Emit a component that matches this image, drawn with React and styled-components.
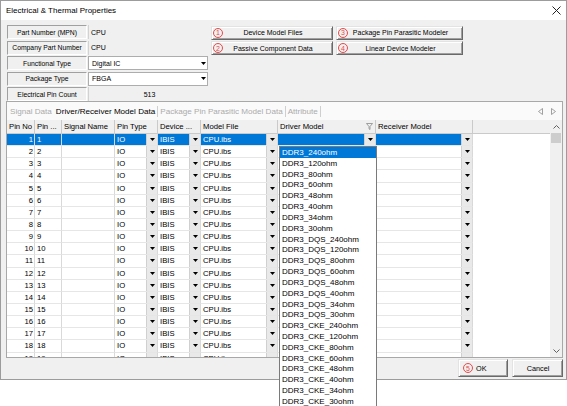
import React from 'react';
import styled, { createGlobalStyle } from 'styled-components';

const GlobalStyle = createGlobalStyle`
  html, body { margin: 0; padding: 0; background: #fff; }
  body { font-family: "Liberation Sans", Arial, sans-serif; color: #000; }
  * { box-sizing: border-box; }
`;

const COLS = '28px 27px 53px 43px 43px 77px 98px 97px 1fr';

const Page = styled.div`
  position: relative;
  width: 567px;
  height: 406px;
  overflow: hidden;
  background: #fff;
`;

const Dialog = styled.div`
  width: 567px;
  height: 380px;
  border: 1px solid #9c9c9c;
  background: #f0f0f0;
  display: flex;
  flex-direction: column;
`;

const TitleBar = styled.div`
  height: 19px;
  background: #fff;
  display: flex;
  align-items: center;
  justify-content: space-between;
  padding: 0 5px 0 5px;
  font-size: 8px;
`;

const Body = styled.div`
  display: flex;
  flex-direction: column;
  padding: 5px 3px 0 6px;
`;

const TopSection = styled.div`
  display: flex;
  gap: 3px;
  height: 76px;
`;

const PropGrid = styled.div`
  display: grid;
  grid-template-columns: 80px 120px;
  grid-auto-rows: 14px;
  row-gap: 1.5px;
  column-gap: 1px;
`;

const PropLabel = styled.div`
  display: flex;
  align-items: center;
  justify-content: center;
  font-size: 6.8px;
  white-space: nowrap;
  border: 1px solid;
  border-color: #a0a0a0 #fff #fff #a0a0a0;
`;

const PropValue = styled.div`
  display: flex;
  align-items: center;
  justify-content: ${p => (p.$center ? 'center' : 'flex-start')};
  padding-left: 2px;
  font-size: 7px;
  border-left: 1px solid #d2d2d2;
`;

const Combo = styled.div`
  display: flex;
  align-items: center;
  justify-content: space-between;
  background: #fff;
  border: 1px solid #adadad;
  padding: 0 1px 0 3px;
  font-size: 7px;
`;

const ActionGrid = styled.div`
  display: grid;
  grid-template-columns: 122px 127px;
  grid-auto-rows: 14px;
  gap: 1.5px 3px;
  padding-top: 0.5px;
`;

const Button = styled.button`
  display: flex;
  align-items: center;
  justify-content: ${p => (p.$left ? 'flex-start' : 'center')};
  gap: 3px;
  margin: 0;
  padding: 0 ${p => (p.$left ? '0' : p.$badge ? '12px' : '0')} 0 ${p => (p.$left ? '4px' : '1px')};
  font-family: inherit;
  font-size: 7px;
  color: #000;
  background: #f0f0f0;
  border: 1px solid;
  border-color: #e3e3e3 #696969 #696969 #e3e3e3;
  box-shadow: inset 1px 1px #fff, inset -1px -1px #a0a0a0;
  white-space: nowrap;
`;

const ButtonText = styled.span`
  flex: ${p => (p.$fill ? 1 : 'none')};
  text-align: center;
`;

const Badge = styled.span`
  flex: none;
  width: 10px;
  height: 10px;
  border: 1px solid #e84a4a;
  border-radius: 50%;
  color: #e84a4a;
  font-size: 7px;
  line-height: 1;
  display: inline-flex;
  align-items: center;
  justify-content: center;
`;

const TabPanel = styled.div`
  margin-left: -1px;
  width: 557px;
  height: 257px;
  border: 1px solid #a8a8a8;
  display: flex;
  flex-direction: column;
  background: #fff;
`;

const TabStrip = styled.div`
  height: 18px;
  display: flex;
  align-items: center;
  padding: 0 4px 0 1px;
  background: #fafafa;
  font-size: 8.1px;
`;

const Tab = styled.div`
  padding: 0 2px;
  height: 11px;
  display: flex;
  align-items: center;
  color: ${p => (p.$active ? '#000' : '#ababab')};
  border-right: ${p => (p.$sep ? '1px solid #cfcfcf' : 'none')};
  white-space: nowrap;
`;

const TabArrows = styled.div`
  margin-left: auto;
  display: flex;
  gap: 8px;
  padding-right: 2px;
`;

const GridArea = styled.div`
  flex: 1;
  display: flex;
  min-height: 0;
`;

const Table = styled.div`
  flex: 1;
  overflow: hidden;
`;

const HeaderRow = styled.div`
  display: grid;
  grid-template-columns: ${COLS};
  height: 14px;
  background: #f0f0f0;
  border-bottom: 1px solid #cacaca;
`;

const HeadCell = styled.div`
  display: flex;
  align-items: center;
  justify-content: space-between;
  padding: 0 2px;
  font-size: 7.7px;
  white-space: nowrap;
  overflow: hidden;
  border-right: ${p => (p.$last ? 'none' : '1px solid #cacaca')};
`;

const Row = styled.div`
  display: grid;
  grid-template-columns: ${COLS};
  height: 12.15px;
`;

const Cell = styled.div`
  display: flex;
  align-items: center;
  justify-content: ${p => (p.$right ? 'flex-end' : 'flex-start')};
  padding: 0 ${p => (p.$right ? '1px' : '0')} 0 ${p => (p.$right ? '0' : '2px')};
  font-size: 7.7px;
  white-space: nowrap;
  overflow: hidden;
  background: ${p => (p.$sel ? '#0078d7' : '#fff')};
  color: ${p => (p.$sel ? '#fff' : '#000')};
  border-right: 1px solid #d9d9d9;
  border-bottom: 1px solid #e6e6e6;
`;

const ComboCell = styled(Cell)`
  padding-right: 0;
`;

const CellText = styled.span`
  flex: 1;
`;

const FillCell = styled.div`
  background: #fff;
`;

const DropBtn = styled.span`
  flex: none;
  width: 11px;
  height: 100%;
  background: #e9e9e9;
  border-left: 1px solid #d0d0d0;
  display: flex;
  align-items: center;
  justify-content: center;
`;

const Scrollbar = styled.div`
  width: 12px;
  display: flex;
  flex-direction: column;
  background: #f0f0f0;
`;

const ScrollBtn = styled.div`
  height: ${p => p.$h}px;
  display: flex;
  align-items: center;
  justify-content: center;
`;

const Thumb = styled.div`
  height: 10px;
  margin: 0 1px;
  background: #cdcdcd;
`;

const Track = styled.div`
  flex: 1;
`;

const Footer = styled.div`
  display: flex;
  justify-content: flex-end;
  gap: 4px;
  margin-top: 1px;
  height: 18px;
`;

const FooterButton = styled(Button)`
  width: ${p => p.$w}px;
  font-size: 7.3px;
`;

const DropList = styled.div`
  position: absolute;
  left: 279px;
  top: 146px;
  width: 98px;
  background: #fff;
  border: 1px solid #7a7a7a;
  z-index: 2;
`;

const ListItem = styled.div`
  height: 10.83px;
  display: flex;
  align-items: center;
  padding-left: 2px;
  font-size: 8px;
  white-space: nowrap;
  background: ${p => (p.$sel ? '#0078d7' : '#fff')};
  color: ${p => (p.$sel ? '#fff' : '#000')};
`;

const Arrow = () => (
  <svg width="5" height="3" viewBox="0 0 5 3">
    <polygon points="0,0 5,0 2.5,3" fill="#000" />
  </svg>
);

const CloseIcon = () => (
  <svg width="9" height="9" viewBox="0 0 9 9">
    <path d="M0.5 0.5 L8.5 8.5 M8.5 0.5 L0.5 8.5" stroke="#222" strokeWidth="1" />
  </svg>
);

const FilterIcon = () => (
  <svg width="7" height="7" viewBox="0 0 7 7">
    <path d="M0.5 0.5 H6.5 L4 3.5 V6.5 L3 5.8 V3.5 Z" fill="none" stroke="#8a8a8a" strokeWidth="0.8" />
  </svg>
);

const TriIcon = ({ dir }) => (
  <svg width="5" height="7" viewBox="0 0 5 7">
    <polygon
      points={dir === 'left' ? '4.5,0.5 0.5,3.5 4.5,6.5' : '0.5,0.5 4.5,3.5 0.5,6.5'}
      fill="none"
      stroke="#8a8a8a"
      strokeWidth="0.8"
    />
  </svg>
);

const Chevron = ({ up }) => (
  <svg width="7" height="4" viewBox="0 0 7 4">
    <polyline points={up ? '0.5,3.5 3.5,0.5 6.5,3.5' : '0.5,0.5 3.5,3.5 6.5,0.5'} fill="none" stroke="#606060" strokeWidth="1" />
  </svg>
);

const drivers = [
  'DDR3_240ohm', 'DDR3_120ohm', 'DDR3_80ohm', 'DDR3_60ohm', 'DDR3_48ohm', 'DDR3_40ohm', 'DDR3_34ohm', 'DDR3_30ohm',
  'DDR3_DQS_240ohm', 'DDR3_DQS_120ohm', 'DDR3_DQS_80ohm', 'DDR3_DQS_60ohm', 'DDR3_DQS_48ohm', 'DDR3_DQS_40ohm', 'DDR3_DQS_34ohm', 'DDR3_DQS_30ohm',
  'DDR3_CKE_240ohm', 'DDR3_CKE_120ohm', 'DDR3_CKE_80ohm', 'DDR3_CKE_60ohm', 'DDR3_CKE_48ohm', 'DDR3_CKE_40ohm', 'DDR3_CKE_34ohm', 'DDR3_CKE_30ohm',
];

const pins = Array.from({ length: 19 }, (_, i) => i + 1);

const ComboField = ({ text, sel, arrow = true }) => (
  <ComboCell $sel={sel}>
    <CellText>{text}</CellText>
    {arrow && (
      <DropBtn>
        <Arrow />
      </DropBtn>
    )}
  </ComboCell>
);

export default function App() {
  return (
    <Page>
      <GlobalStyle />
      <Dialog>
        <TitleBar>
          <span>Electrical &amp; Thermal Properties</span>
          <CloseIcon />
        </TitleBar>
        <Body>
          <TopSection>
            <PropGrid>
              <PropLabel>Part Number (MPN)</PropLabel>
              <PropValue>CPU</PropValue>
              <PropLabel>Company Part Number</PropLabel>
              <PropValue>CPU</PropValue>
              <PropLabel>Functional Type</PropLabel>
              <Combo>
                <span>Digital IC</span>
                <Arrow />
              </Combo>
              <PropLabel>Package Type</PropLabel>
              <Combo>
                <span>FBGA</span>
                <Arrow />
              </Combo>
              <PropLabel>Electrical Pin Count</PropLabel>
              <PropValue $center>513</PropValue>
            </PropGrid>
            <ActionGrid>
              <Button $badge>
                <Badge>1</Badge>
                <ButtonText $fill>Device Model Files</ButtonText>
              </Button>
              <Button $badge>
                <Badge>3</Badge>
                <ButtonText $fill>Package Pin Parasitic Modeler</ButtonText>
              </Button>
              <Button $badge>
                <Badge>2</Badge>
                <ButtonText $fill>Passive Component Data</ButtonText>
              </Button>
              <Button $badge>
                <Badge>4</Badge>
                <ButtonText $fill>Linear Device Modeler</ButtonText>
              </Button>
            </ActionGrid>
          </TopSection>

          <TabPanel>
            <TabStrip>
              <Tab>Signal Data</Tab>
              <Tab $active $sep>Driver/Receiver Model Data</Tab>
              <Tab $sep>Package Pin Parasitic Model Data</Tab>
              <Tab $sep>Attribute</Tab>
              <TabArrows>
                <TriIcon dir="left" />
                <TriIcon dir="right" />
              </TabArrows>
            </TabStrip>
            <GridArea>
              <Table>
                <HeaderRow>
                  <HeadCell>Pin No</HeadCell>
                  <HeadCell>Pin ...</HeadCell>
                  <HeadCell>Signal Name</HeadCell>
                  <HeadCell>Pin Type</HeadCell>
                  <HeadCell>Device ...</HeadCell>
                  <HeadCell>Model File</HeadCell>
                  <HeadCell>
                    <span>Driver Model</span>
                    <FilterIcon />
                  </HeadCell>
                  <HeadCell>Receiver Model</HeadCell>
                  <HeadCell $last />
                </HeaderRow>
                {pins.map(n => {
                  const sel = n === 1;
                  return (
                    <Row key={n}>
                      <Cell $right $sel={sel}>{n}</Cell>
                      <Cell $sel={sel}>{n}</Cell>
                      <Cell $sel={sel} />
                      <ComboField text="IO" sel={sel} />
                      <ComboField text="IBIS" sel={sel} />
                      <ComboField text="CPU.ibs" sel={sel} />
                      <ComboField text="" sel={sel} arrow={sel} />
                      <ComboField text="" sel={sel} />
                      <FillCell />
                    </Row>
                  );
                })}
              </Table>
              <Scrollbar>
                <ScrollBtn $h={13}>
                  <Chevron up />
                </ScrollBtn>
                <Thumb />
                <Track />
                <ScrollBtn $h={12}>
                  <Chevron />
                </ScrollBtn>
              </Scrollbar>
            </GridArea>
          </TabPanel>

          <Footer>
            <FooterButton $left $w={50}>
              <Badge>5</Badge>
              <ButtonText>OK</ButtonText>
            </FooterButton>
            <FooterButton $w={51}>
              <ButtonText>Cancel</ButtonText>
            </FooterButton>
          </Footer>
        </Body>
      </Dialog>

      <DropList>
        {drivers.map((d, i) => (
          <ListItem key={d} $sel={i === 0}>
            {d}
          </ListItem>
        ))}
      </DropList>
    </Page>
  );
}
